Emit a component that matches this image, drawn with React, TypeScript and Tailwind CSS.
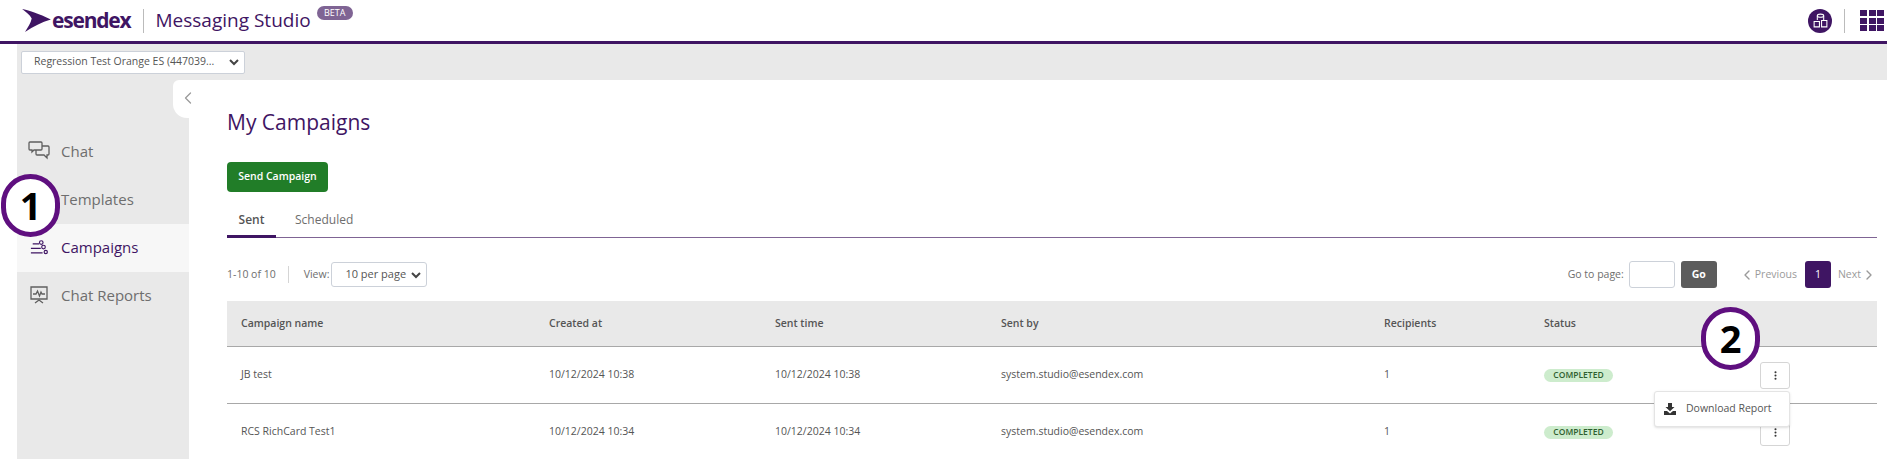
import { ChevronLeft, ChevronRight, EllipsisVertical } from 'lucide-react';

const rows = [
  { name: 'JB test', at: '10/12/2024 10:38', sent: '10/12/2024 10:38' },
  { name: 'RCS RichCard Test1', at: '10/12/2024 10:34', sent: '10/12/2024 10:34' },
];

const cols = 'grid grid-cols-[308px_226px_226px_383px_160px_1fr] pl-[14px] items-center';

function ChatIcon() {
  return (
    <svg width="22" height="20" viewBox="0 0 22 20" fill="none" stroke="#5f5f5f" strokeWidth="1.3">
      <path d="M2 1h11a1 1 0 0 1 1 1v6a1 1 0 0 1-1 1H6l-2 2V9H2a1 1 0 0 1-1-1V2a1 1 0 0 1 1-1z" />
      <path d="M14 5h6a1 1 0 0 1 1 1v7a1 1 0 0 1-1 1h-1v3l-3-3H9a1 1 0 0 1-1-1V9" />
    </svg>
  );
}

function CampaignIcon() {
  return (
    <svg width="18" height="15" viewBox="0 0 20 16" fill="none" stroke="#3f1563" strokeWidth="1.3">
      <path d="M3 4h7M1 9h11M1 14h13" />
      <circle cx="12.5" cy="2.5" r="2" />
      <circle cx="15" cy="7.5" r="2" />
      <circle cx="17.5" cy="13" r="1.8" />
    </svg>
  );
}

function ReportIcon() {
  return (
    <svg width="18" height="19" viewBox="0 0 18 19" fill="none" stroke="#5f5f5f" strokeWidth="1.3">
      <path d="M1 1h16v12H1z" />
      <path d="M3 8h3l1.5-3 2 5 1.5-4 1 2h3" />
      <path d="M5 17l4-3 4 3" />
    </svg>
  );
}

function NavItem({ label, active, icon }: { label: string; active?: boolean; icon?: React.ReactNode }) {
  return (
    <div className={`h-12 flex items-center pb-[2px] ${active ? 'bg-[#f7f7f7] text-[#3f1563]' : 'text-[#6e6e6e]'}`}>
      <div className="w-[44px] flex justify-center">{icon}</div>
      <span className="text-[15px]">{label}</span>
    </div>
  );
}

function Marker({ n, className }: { n: string; className: string }) {
  return (
    <div
      className={`absolute w-[59px] h-[63px] rounded-full border-[5px] border-[#5f0f7f] bg-white flex items-center justify-center text-black text-[38px] font-bold ${className}`}
    >
      {n}
    </div>
  );
}

export default function App() {
  return (
    <div className="relative w-[1887px] h-[459px] overflow-hidden bg-white font-['Open_Sans',sans-serif] text-[#4a4a4a]">
      {/* top bar */}
      <header className="h-[44px] flex items-center pl-[22px] pr-[3px] border-b-[3px] border-[#3f1563]">
        <svg width="29" height="23" viewBox="0 0 30 24" fill="#3f1563">
          <path d="M0 0c6 1 18 5 30 11C20 14 12 18 3 24c3-5 6-9 7-14C8 6 4 3 0 0z" />
        </svg>
        <span className="ml-[1px] text-[21px] font-bold tracking-[-1.2px] text-[#3f1563]">esendex</span>
        <div className="w-px h-[24px] bg-[#bbbbbb] ml-[12px] mr-[12px]" />
        <span className="text-[19px] text-[#3f1563]">Messaging Studio</span>
        <span className="self-start mt-[6px] ml-[6px] h-[14px] w-[36px] rounded-full bg-[#7f6494] text-white text-[9px] flex items-center justify-center">
          BETA
        </span>
        <div className="ml-auto flex items-center">
          <div className="w-6 h-6 rounded-full bg-[#3f1563] flex items-center justify-center">
            <svg width="17" height="17" viewBox="0 0 16 16" fill="none" stroke="#ffffff" strokeWidth="1">
              <ellipse cx="8" cy="3.5" rx="3" ry="1.5" />
              <path d="M5 3.5v4M11 3.5v4M2 9h5v5H2zM9 8h5v6H9z" />
            </svg>
          </div>
          <div className="w-px h-[24px] bg-[#bbbbbb] ml-[12px] mr-[15px]" />
          <div className="grid grid-cols-3 gap-[1.5px]">
            {Array.from({ length: 9 }).map((_, i) => (
              <div key={i} className="w-[7px] h-[6px] bg-[#3f1563]" />
            ))}
          </div>
        </div>
      </header>

      <div className="flex pl-[17px] h-[415px]">
        <div className="flex-1 flex flex-col min-w-0">
          {/* account bar */}
          <div className="h-[36px] bg-[#e9e9e9] flex items-center pl-[4px] shrink-0">
            <div className="w-[224px] h-[23px] bg-white border border-[#ccd1d9] rounded-[2px] flex items-center pl-[12px] pr-[4px] text-[10.5px] text-[#555555]">
              <span>Regression Test Orange ES (447039...</span>
              <svg className="ml-auto" width="12" height="12" viewBox="0 0 12 12" fill="none" stroke="#444444" strokeWidth="2">
                <path d="M2 4l4 4 4-4" />
              </svg>
            </div>
          </div>

          <div className="flex flex-1 min-h-0">
            {/* sidebar */}
            <aside className="relative w-[172px] shrink-0 bg-[#e9e9e9] pt-[48px]">
              <div className="absolute top-0 right-0 w-[16px] h-[38px] bg-white rounded-tl-[6px] rounded-bl-[14px]">
                <ChevronLeft size={20} strokeWidth={1.5} className="absolute left-[5px] top-[8px] text-[#9a9a9a]" />
              </div>
              <NavItem label="Chat" icon={<ChatIcon />} />
              <NavItem label="Templates" />
              <NavItem label="Campaigns" active icon={<CampaignIcon />} />
              <NavItem label="Chat Reports" icon={<ReportIcon />} />
            </aside>

            {/* main */}
            <main className="flex-1 min-w-0 pl-[38px] pr-[10px]">
              <h1 className="mt-[27px] h-[30px] leading-[30px] text-[21px] text-[#3f1563]">My Campaigns</h1>
              <button className="mt-[25px] block w-[101px] h-[30px] rounded-[4px] bg-[#217d28] text-white text-[10.5px] font-semibold">
                Send Campaign
              </button>
              <div className="mt-[15px] h-[31px] flex border-b border-[#7f6494] text-[12px]">
                <div className="w-[49px] h-[31px] border-b-[3px] border-[#3f1563] text-center leading-[26px] text-[#555555] font-semibold">
                  Sent
                </div>
                <div className="ml-[19px] leading-[26px] text-[#6e6e6e]">Scheduled</div>
              </div>

              {/* pagination */}
              <div className="mt-[23px] h-[27px] flex items-center text-[10.5px] text-[#6e6e6e]">
                <span>1-10 of 10</span>
                <div className="w-px h-[17px] bg-[#d5d5d5] ml-[12px] mr-[15px]" />
                <span>View:</span>
                <div className="ml-[2px] w-[96px] h-[25px] border border-[#ccd1d9] rounded-[3px] flex items-center pl-[13px] pr-[4px] text-[11px] text-[#555555]">
                  <span className="whitespace-nowrap">10 per page</span>
                  <svg className="ml-auto" width="12" height="12" viewBox="0 0 12 12" fill="none" stroke="#444444" strokeWidth="2">
                    <path d="M2 4l4 4 4-4" />
                  </svg>
                </div>
                <div className="ml-auto flex items-center">
                  <span>Go to page:</span>
                  <div className="ml-[5px] w-[46px] h-[27px] bg-white border border-[#ccd1d9] rounded-[3px]" />
                  <div className="ml-[6px] w-[36px] h-[27px] bg-[#5c5c5c] rounded-[3px] text-white font-bold flex items-center justify-center">
                    Go
                  </div>
                  <div className="ml-[22px] flex items-center text-[#9a9a9a]">
                    <ChevronLeft size={16} />
                    <span>Previous</span>
                  </div>
                  <div className="ml-[8px] w-[26px] h-[27px] bg-[#3f1563] rounded-[3px] text-white flex items-center justify-center">
                    1
                  </div>
                  <div className="ml-[7px] flex items-center text-[#9a9a9a]">
                    <span>Next</span>
                    <ChevronRight size={16} />
                  </div>
                </div>
              </div>

              {/* table */}
              <div className="mt-[13px] text-[10.5px]">
                <div className={`${cols} h-[46px] bg-[#e9e9e9] border-b border-[#a8a8a8] text-[#555555] font-semibold`}>
                  <span>Campaign name</span>
                  <span>Created at</span>
                  <span>Sent time</span>
                  <span>Sent by</span>
                  <span>Recipients</span>
                  <span>Status</span>
                </div>
                {rows.map((r) => (
                  <div key={r.name} className={`${cols} h-[57px] border-b border-[#a8a8a8] text-[#555555]`}>
                    <span>{r.name}</span>
                    <span>{r.at}</span>
                    <span>{r.sent}</span>
                    <span>system.studio@esendex.com</span>
                    <span>1</span>
                    <div className="flex items-center">
                      <span className="w-[69px] h-[13px] rounded-full bg-[#cdeccd] text-[#2f5f2f] text-[8.5px] font-semibold flex items-center justify-center">
                        COMPLETED
                      </span>
                      <div className="ml-[147px] w-[30px] h-[27px] bg-white border border-[#d5d5d5] rounded-[3px] flex items-center justify-center">
                        <EllipsisVertical size={11} strokeWidth={2.5} className="text-[#333333]" />
                      </div>
                    </div>
                  </div>
                ))}
              </div>
            </main>
          </div>
        </div>
      </div>

      {/* dropdown menu */}
      <div className="absolute left-[1654px] top-[391px] w-[136px] h-[36px] bg-white border border-[#e4e4e4] rounded-[3px] shadow-sm flex items-center pl-[9px] text-[10.5px] text-[#555555]">
        <svg width="12" height="12" viewBox="0 0 12 12" fill="#333333">
          <path d="M4 0h4v4h2.5L6 8.3 1.5 4H4z" />
          <path d="M0 8h3l3 2.5L9 8h3v4H0z" />
        </svg>
        <span className="ml-[10px]">Download Report</span>
      </div>

      {/* numbered callouts */}
      <Marker n="1" className="left-[1px] top-[174px]" />
      <Marker n="2" className="left-[1701px] top-[307px]" />
    </div>
  );
}
